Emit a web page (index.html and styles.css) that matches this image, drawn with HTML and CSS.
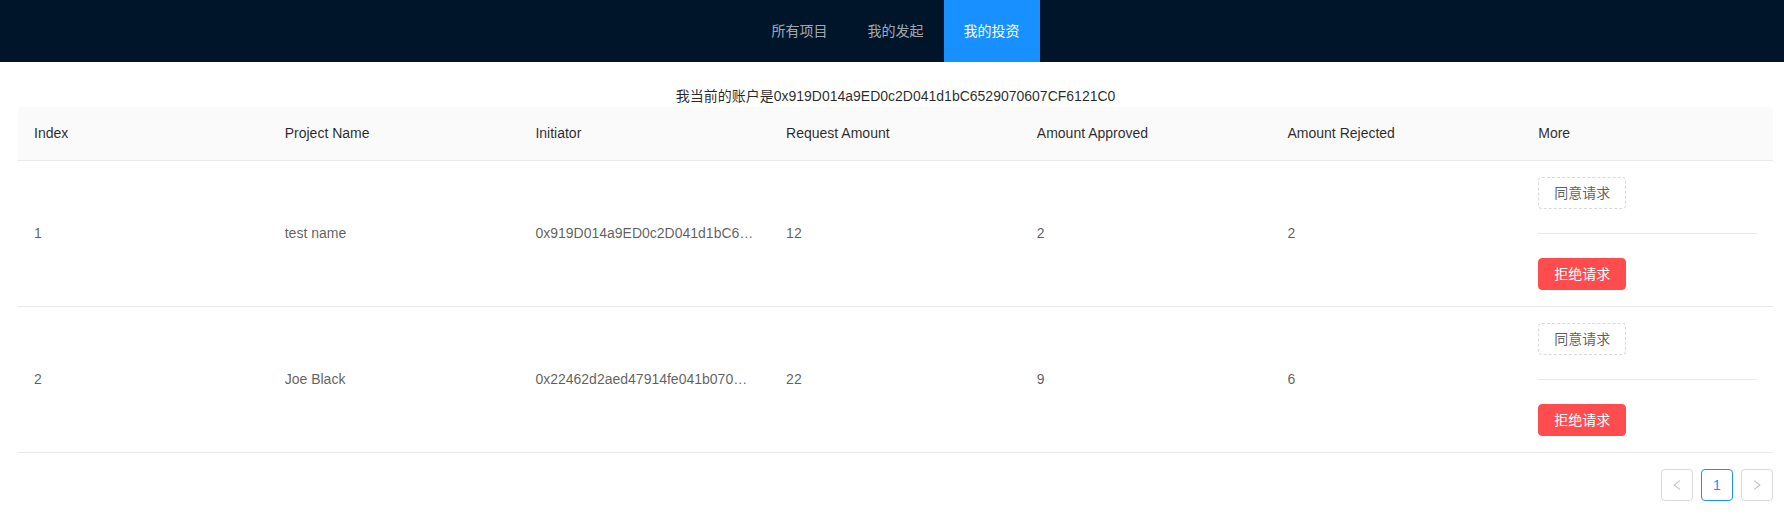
FILE: index.html
```html
<!DOCTYPE html>
<html lang="zh-CN">
<head>
<meta charset="utf-8">
<title>我的投资</title>
<link rel="stylesheet" href="styles.css">
</head>
<body>
<header class="topbar">
  <nav class="menu">
    <a class="menu-item">所有项目</a>
    <a class="menu-item">我的发起</a>
    <a class="menu-item is-active">我的投资</a>
  </nav>
</header>
<main class="content">
  <div class="account">我当前的账户是0x919D014a9ED0c2D041d1bC6529070607CF6121C0</div>
  <table class="table">
    <thead>
      <tr>
        <th>Index</th>
        <th>Project Name</th>
        <th>Initiator</th>
        <th>Request Amount</th>
        <th>Amount Approved</th>
        <th>Amount Rejected</th>
        <th>More</th>
      </tr>
    </thead>
    <tbody>
      <tr>
        <td>1</td>
        <td>test name</td>
        <td class="ellipsis" title="0x919D014a9ED0c2D041d1bC6529070607CF6121C0">0x919D014a9ED0c2D041d1bC6…</td>
        <td>12</td>
        <td>2</td>
        <td>2</td>
        <td>
          <button class="btn btn-dashed">同意请求</button>
          <div class="divider"></div>
          <button class="btn btn-danger">拒绝请求</button>
        </td>
      </tr>
      <tr>
        <td>2</td>
        <td>Joe Black</td>
        <td class="ellipsis">0x22462d2aed47914fe041b070…</td>
        <td>22</td>
        <td>9</td>
        <td>6</td>
        <td>
          <button class="btn btn-dashed">同意请求</button>
          <div class="divider"></div>
          <button class="btn btn-danger">拒绝请求</button>
        </td>
      </tr>
    </tbody>
  </table>
  <div class="pagination">
    <span class="page-item is-disabled">
      <svg viewBox="64 64 896 896" width="12" height="12" fill="currentColor"><path d="M724 218.3V141c0-6.7-7.7-10.4-12.9-6.3L260.3 486.8a31.86 31.86 0 0 0 0 50.3l450.8 352.1c5.3 4.1 12.9.4 12.9-6.3v-77.3c0-4.9-2.3-9.6-6.1-12.6l-360-281 360-281.1c3.8-3 6.1-7.700 6.1-12.6z"/></svg>
    </span>
    <span class="page-item is-current">1</span>
    <span class="page-item is-disabled">
      <svg viewBox="64 64 896 896" width="12" height="12" fill="currentColor"><path d="M765.7 486.8L314.9 134.7A7.97 7.97 0 0 0 302 141v77.3c0 4.9 2.3 9.6 6.1 12.6l360 281.1-360 281.1c-3.9 3-6.1 7.7-6.1 12.6V883c0 6.7 7.7 10.4 12.9 6.3l450.8-352.1a31.96 31.96 0 0 0 0-50.4z"/></svg>
    </span>
  </div>
</main>
</body>
</html>
```

FILE: styles.css
```css
html, body {
  margin: 0;
  padding: 0;
  background: #fff;
}

body {
  font-family: "Liberation Sans", Arial, "Noto Sans CJK SC", sans-serif;
  font-size: 14px;
  line-height: 1.5;
  color: rgba(0, 0, 0, 0.65);
}

.topbar {
  height: 62px;
  background: #001529;
  padding: 0 11px 0 18px;
  display: flex;
  justify-content: center;
}

.menu {
  display: flex;
  height: 62px;
}

.menu-item {
  display: block;
  padding: 0 20px;
  line-height: 62px;
  color: rgba(255, 255, 255, 0.65);
  cursor: pointer;
}

.menu-item.is-active {
  background: #1890ff;
  color: #fff;
}

.content {
  padding: 0 11px 0 18px;
}

.account {
  margin-top: 24px;
  line-height: 21px;
  text-align: center;
  color: rgba(0, 0, 0, 0.85);
}

.table {
  width: 100%;
  table-layout: fixed;
  border-collapse: separate;
  border-spacing: 0;
}

.table th {
  background: #fafafa;
  color: rgba(0, 0, 0, 0.85);
  font-weight: normal;
  text-align: left;
  padding: 16px;
  border-bottom: 1px solid #e8e8e8;
}

.table th:first-child {
  border-top-left-radius: 4px;
}

.table th:last-child {
  border-top-right-radius: 4px;
}

.table td {
  padding: 16px;
  border-bottom: 1px solid #e8e8e8;
  vertical-align: middle;
}

.table td.ellipsis {
  white-space: nowrap;
  overflow: hidden;
  text-overflow: ellipsis;
}

.btn {
  display: block;
  height: 32px;
  padding: 0 15px;
  font-family: inherit;
  font-size: 14px;
  line-height: 30px;
  border-radius: 4px;
  cursor: pointer;
}

.btn-dashed {
  background: #fff;
  border: 1px dashed #d9d9d9;
  color: rgba(0, 0, 0, 0.65);
}

.btn-danger {
  background: #ff4d4f;
  border: 1px solid #ff4d4f;
  color: #fff;
}

.divider {
  height: 1px;
  margin: 24px 0;
  background: #e8e8e8;
}

.pagination {
  display: flex;
  justify-content: flex-end;
  gap: 8px;
  margin: 16px 0;
}

.page-item {
  box-sizing: border-box;
  width: 32px;
  height: 32px;
  border: 1px solid #d9d9d9;
  border-radius: 4px;
  display: flex;
  align-items: center;
  justify-content: center;
  color: rgba(0, 0, 0, 0.65);
  background: #fff;
}

.page-item.is-disabled {
  color: rgba(0, 0, 0, 0.25);
}

.page-item.is-current {
  border-color: #1890ff;
  color: #1890ff;
}
```
